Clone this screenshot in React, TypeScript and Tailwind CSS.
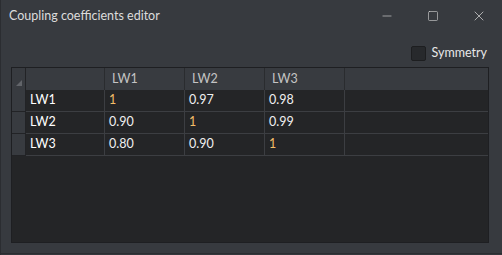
import { Fragment } from "react";
import { Minus, Square, X } from "lucide-react";

const cols = ["LW1", "LW2", "LW3"];
const rows = [
  { name: "LW1", values: ["1", "0.97", "0.98"] },
  { name: "LW2", values: ["0.90", "1", "0.99"] },
  { name: "LW3", values: ["0.80", "0.90", "1"] },
];

export default function App() {
  return (
    <div
      className="w-[502px] h-[255px] flex flex-col bg-[#373a3f] border-l border-[#2b2d31] text-[#e8e8e8] overflow-hidden"
      style={{ fontFamily: 'Lato, "Noto Sans", sans-serif' }}
    >
      {/* title bar */}
      <div className="h-[32px] flex items-center pl-[8px] text-[12.5px] text-[#dcdcdc]">
        <span className="flex-1">Coupling coefficients editor</span>
        <div className="flex items-center text-[#d8d8d8]">
          <button className="w-[46px] h-[32px] flex items-center justify-center">
            <Minus size={14} strokeWidth={1.1} />
          </button>
          <button className="w-[46px] h-[32px] flex items-center justify-center">
            <Square size={12} strokeWidth={1.2} />
          </button>
          <button className="w-[46px] h-[32px] flex items-center justify-center">
            <X size={16} strokeWidth={1.1} />
          </button>
        </div>
      </div>

      {/* options */}
      <div className="flex justify-end items-center h-[24px] mt-[9px] pr-[15px] text-[12.5px]">
        <label className="flex items-center gap-[6px]">
          <span className="w-[15px] h-[15px] rounded-[2px] bg-[#27292c] border border-[#1d1e20]" />
          <span>Symmetry</span>
        </label>
      </div>

      {/* table */}
      <div className="mt-[2px] ml-[10px] mr-[13px] h-[176px] border border-[#1e1f22] bg-[#242527] text-[12.5px]">
        <div className="grid grid-cols-[14px_79px_80px_80px_80px_1fr] grid-rows-[22px_22px_22px_22px]">
          <div className="bg-[#383b40] border-r border-[#222326] relative">
            <span className="absolute right-[3px] bottom-[4px] w-0 h-0 border-l-[6px] border-l-transparent border-b-[6px] border-b-[#62656a]" />
          </div>
          <div className="bg-[#383b40] border-r border-[#2a2c2f]" />
          {cols.map((c) => (
            <div
              key={c}
              className="bg-[#383b40] border-r border-[#2a2c2f] flex items-center pl-[7px] text-[#c4c4c4]"
            >
              {c}
            </div>
          ))}
          <div className="bg-[#383b40]" />

          {rows.map((r, i) => (
            <Fragment key={r.name}>
              <div className="bg-[#383b40] border-r border-b border-[#222326]" />
              <div className="border-r border-b border-[#3c3e42] flex items-center pl-[4px] text-white">
                {r.name}
              </div>
              {r.values.map((v, j) => (
                <div
                  key={j}
                  className={
                    "border-r border-b border-[#3c3e42] flex items-center pl-[4px] " +
                    (i === j ? "text-[#f4bd68]" : "text-[#f0f0f0]")
                  }
                >
                  {v}
                </div>
              ))}
              <div className="border-b border-[#3c3e42]" />
            </Fragment>
          ))}
        </div>
      </div>

      <div className="mt-[10px] border-t border-[#2b2d31] flex-1 bg-[#34373c]" />
    </div>
  );
}
